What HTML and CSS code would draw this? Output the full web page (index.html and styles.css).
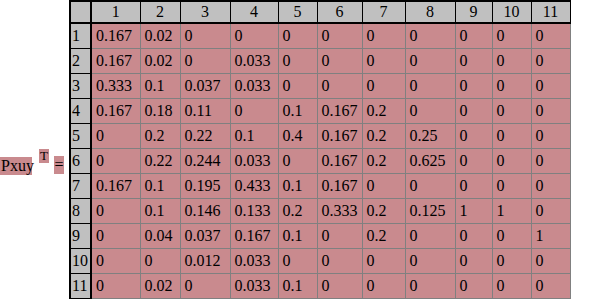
FILE: index.html
```html
<!DOCTYPE html>
<html>
<head>
<meta charset="utf-8">
<link rel="stylesheet" href="styles.css">
</head>
<body>
<div class="wrap">
  <div class="label">
    <span class="name">Pxuy</span>
    <span class="sup">T</span>
    <span class="eq">=</span>
  </div>
  <table class="matrix">
    <colgroup>
      <col style="width:21px"><col style="width:49px"><col style="width:40px"><col style="width:50px"><col style="width:48px"><col style="width:39px"><col style="width:45px"><col style="width:43px"><col style="width:50px"><col style="width:37px"><col style="width:39px"><col style="width:39px">
    </colgroup>
    <thead>
      <tr><th class="corner"></th><th>1</th><th>2</th><th>3</th><th>4</th><th>5</th><th>6</th><th>7</th><th>8</th><th>9</th><th>10</th><th>11</th></tr>
    </thead>
    <tbody>
      <tr><th>1</th><td>0.167</td><td>0.02</td><td>0</td><td>0</td><td>0</td><td>0</td><td>0</td><td>0</td><td>0</td><td>0</td><td>0</td></tr>
      <tr><th>2</th><td>0.167</td><td>0.02</td><td>0</td><td>0.033</td><td>0</td><td>0</td><td>0</td><td>0</td><td>0</td><td>0</td><td>0</td></tr>
      <tr><th>3</th><td>0.333</td><td>0.1</td><td>0.037</td><td>0.033</td><td>0</td><td>0</td><td>0</td><td>0</td><td>0</td><td>0</td><td>0</td></tr>
      <tr><th>4</th><td>0.167</td><td>0.18</td><td>0.11</td><td>0</td><td>0.1</td><td>0.167</td><td>0.2</td><td>0</td><td>0</td><td>0</td><td>0</td></tr>
      <tr><th>5</th><td>0</td><td>0.2</td><td>0.22</td><td>0.1</td><td>0.4</td><td>0.167</td><td>0.2</td><td>0.25</td><td>0</td><td>0</td><td>0</td></tr>
      <tr><th>6</th><td>0</td><td>0.22</td><td>0.244</td><td>0.033</td><td>0</td><td>0.167</td><td>0.2</td><td>0.625</td><td>0</td><td>0</td><td>0</td></tr>
      <tr><th>7</th><td>0.167</td><td>0.1</td><td>0.195</td><td>0.433</td><td>0.1</td><td>0.167</td><td>0</td><td>0</td><td>0</td><td>0</td><td>0</td></tr>
      <tr><th>8</th><td>0</td><td>0.1</td><td>0.146</td><td>0.133</td><td>0.2</td><td>0.333</td><td>0.2</td><td>0.125</td><td>1</td><td>1</td><td>0</td></tr>
      <tr><th>9</th><td>0</td><td>0.04</td><td>0.037</td><td>0.167</td><td>0.1</td><td>0</td><td>0.2</td><td>0</td><td>0</td><td>0</td><td>1</td></tr>
      <tr><th>10</th><td>0</td><td>0</td><td>0.012</td><td>0.033</td><td>0</td><td>0</td><td>0</td><td>0</td><td>0</td><td>0</td><td>0</td></tr>
      <tr><th>11</th><td>0</td><td>0.02</td><td>0</td><td>0.033</td><td>0.1</td><td>0</td><td>0</td><td>0</td><td>0</td><td>0</td><td>0</td></tr>
    </tbody>
  </table>
</div>
</body>
</html>
```
FILE: styles.css
```css
html, body {
  margin: 0;
  padding: 0;
  background: #ffffff;
}
body {
  font-family: "Liberation Serif", "Times New Roman", serif;
  font-size: 16px;
  color: #000;
}
.wrap {
  display: flex;
  align-items: flex-start;
  width: 589px;
  height: 301px;
}
.label {
  width: 69px;
  flex: none;
  position: relative;
  height: 26px;
  margin-top: 149px;
}
.label span {
  position: absolute;
  background: #c98a8e;
  line-height: 18px;
  height: 18px;
}
.name {
  left: 0;
  top: 8px;
  width: 32px;
  padding-left: 1px;
  box-sizing: border-box;
}
.sup {
  left: 39px;
  top: 0;
  width: 10px;
  height: 14px !important;
  line-height: 14px !important;
  font-size: 13px;
  text-align: center;
}
.eq {
  left: 54px;
  top: 7px;
  width: 10px;
  text-align: center;
}
.matrix {
  border-collapse: collapse;
  table-layout: fixed;
  flex: none;
  border-left: 2px solid #000;
  border-top: 2px solid #000;
}
.matrix th, .matrix td {
  height: 24px;
  padding: 0;
  white-space: nowrap;
  font-weight: normal;
}
.matrix thead th {
  background: #c0c0c0;
  height: 20px;
  text-align: center;
  border-left: 1px solid #000;
  border-right: 1px solid #000;
  border-bottom: 2px solid #000;
}
.matrix tbody th {
  background: #c0c0c0;
  text-align: left;
  padding-left: 1px;
  border-right: 2px solid #000;
  border-bottom: 1px solid #000;
}
.matrix td {
  background: #c98a8e;
  text-align: left;
  padding-left: 4px;
  border: 1px solid #808080;
}
.matrix thead th.corner {
  border-right: 2px solid #000;
}
```
